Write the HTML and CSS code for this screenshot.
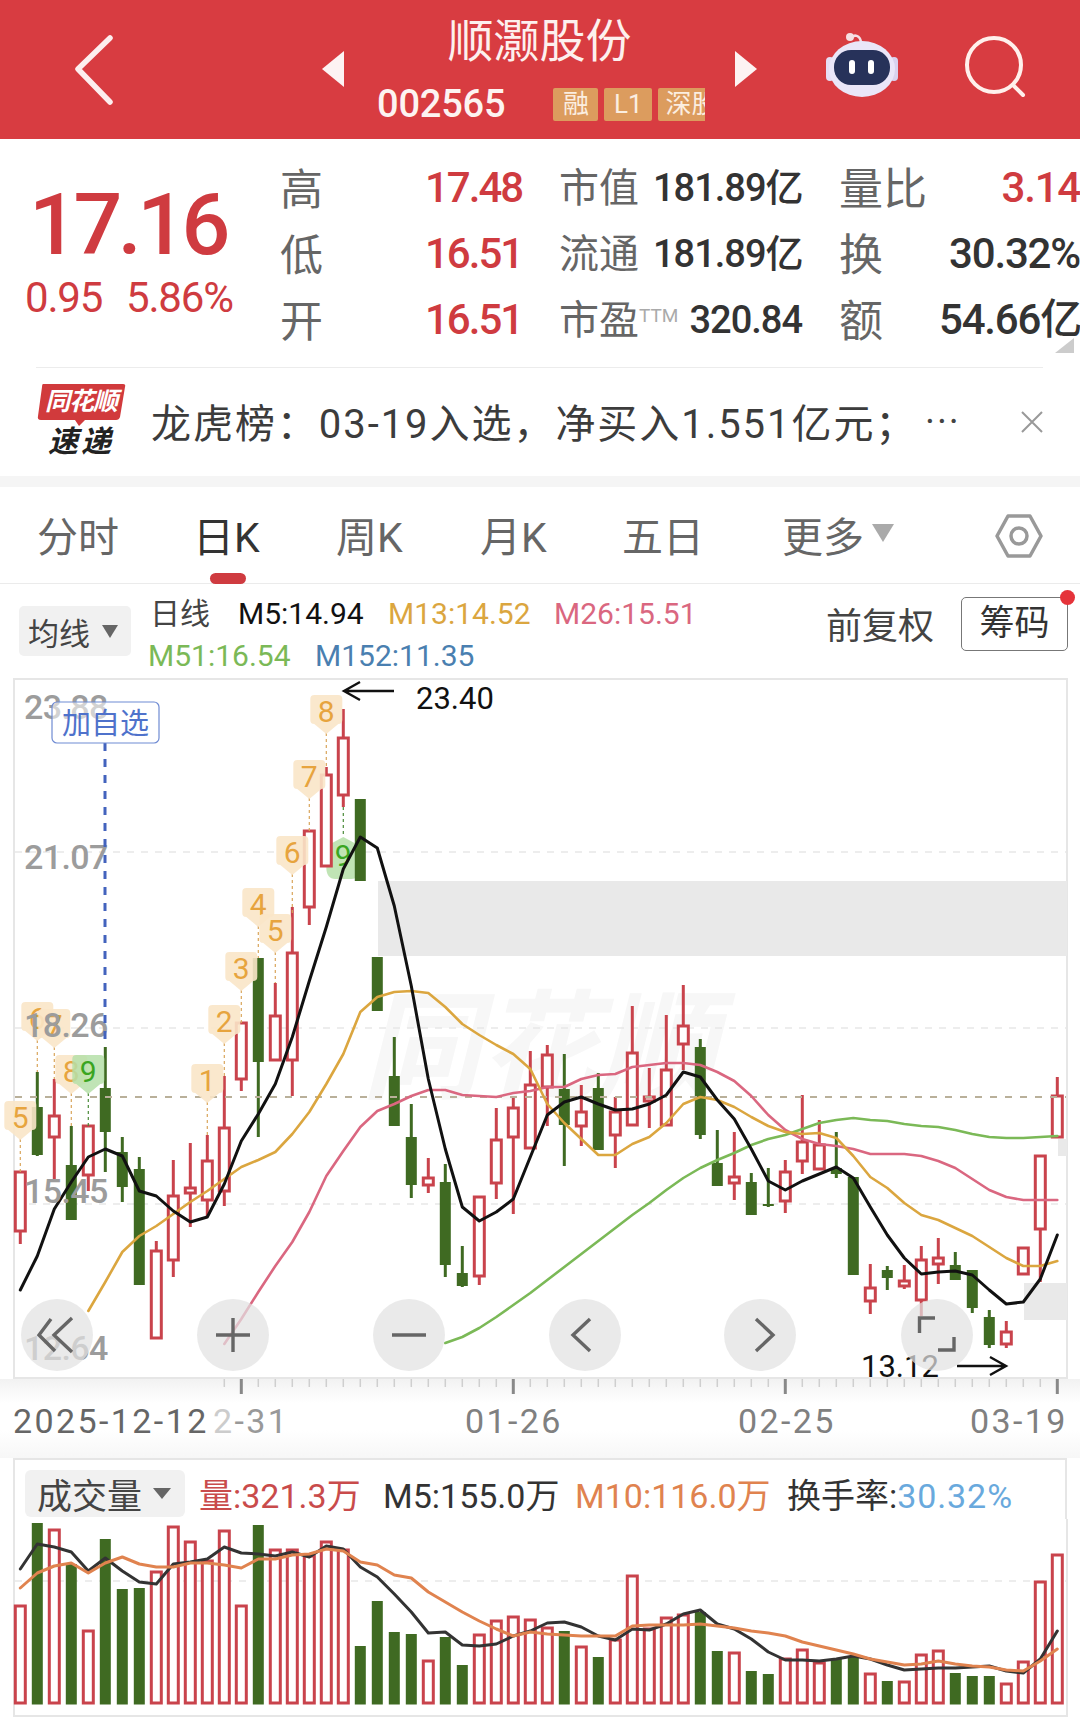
FILE: index.html
```html
<!DOCTYPE html>
<html lang="zh-CN">
<head>
    <meta charset="UTF-8">
    <meta name="viewport" content="width=device-width, initial-scale=1.0">
    <title>顺灏股份 002565</title>
    <link rel="stylesheet" href="styles.css">
</head>
<body>
    <header class="topbar">
        <div class="back">
            <svg width="40" height="70" viewBox="0 0 40 70"><path d="M36 3 L4 34 L36 67" class="back-line"/></svg>
        </div>
        <div class="tri tri-left"></div>
        <div class="stock">
            <div class="stock-name">顺灏股份</div>
            <div class="stock-meta">
                <span class="stock-code">002565</span>
                <div class="tags">
                    <span class="tag tag-rong">融</span>
                    <span class="tag tag-l1">L1</span>
                    <span class="tag tag-shen">深股</span>
                </div>
            </div>
        </div>
        <div class="tri tri-right"></div>
        <svg class="robot" width="76" height="68" viewBox="0 0 76 68">
            <path d="M27 7 C30 3 36 4 37 11" fill="none" stroke="#f4dfe6" stroke-width="2.5"/>
            <circle cx="26" cy="6" r="4" fill="#f6dfe2"/>
            <rect x="2" y="26" width="8" height="24" rx="4" fill="#e6def4"/>
            <rect x="66" y="26" width="8" height="24" rx="4" fill="#d9d2ee"/>
            <ellipse cx="38" cy="38" rx="33" ry="28" fill="#eae6f8"/>
            <rect x="10" y="19" width="56" height="35" rx="17" fill="#27325a"/>
            <rect x="25" y="29" width="6" height="14" rx="3" fill="#fff"/>
            <rect x="44" y="29" width="6" height="14" rx="3" fill="#fff"/>
        </svg>
        <svg class="search" width="68" height="68" viewBox="0 0 68 68">
            <circle cx="30" cy="30" r="27" class="search-line"/>
            <path d="M49 50 L59 60" class="search-line"/>
        </svg>
    </header>

    <section class="quote">
        <div class="price-box">
            <div class="price">17.16</div>
            <div class="change"><span>0.95</span><span>5.86%</span></div>
        </div>
        <div class="stats">
            <span class="lbl">高</span><span class="up">17.48</span>
            <span class="lbl2">市值</span><span class="val">181.89亿</span>
            <span class="lbl3">量比</span><span class="val3 up">3.14</span>

            <span class="lbl">低</span><span class="up">16.51</span>
            <span class="lbl2">流通</span><span class="val">181.89亿</span>
            <span class="lbl3">换</span><span class="val3">30.32%</span>

            <span class="lbl">开</span><span class="up">16.51</span>
            <span class="lbl2 pe">市盈<sup class="ttm">TTM</sup></span><span class="val pe-val">320.84</span>
            <span class="lbl3">额</span><span class="val3">54.66亿</span>
        </div>
        <div class="corner"></div>
    </section>

    <section class="news">
        <svg class="news-logo" width="90" height="76" viewBox="0 0 90 76">
            <path d="M6 2 H86 Q89 2 88 5 L83 35 Q82 38 79 38 H48 L42 44 L38 38 H4 Q0 38 1 34 L5 5 Q5 2 6 2 Z" fill="#d13a3c"/>
            <text x="44" y="28" class="logo-top">同花顺</text>
            <text x="44" y="70" class="logo-bottom">速递</text>
        </svg>
        <div class="news-text">龙虎榜：03-19入选，净买入1.551亿元；</div>
        <div class="news-more">···</div>
        <svg class="news-close" width="24" height="24" viewBox="0 0 24 24"><path d="M2 2 L22 22 M22 2 L2 22" stroke="#999" stroke-width="2" fill="none"/></svg>
    </section>

    <nav class="tabs">
        <span class="tab tab-a">分时</span>
        <span class="tab tab-b on">日K</span>
        <span class="tab tab-c">周K</span>
        <span class="tab tab-d">月K</span>
        <span class="tab tab-e">五日</span>
        <span class="tab tab-f">更多</span>
        <span class="more-arrow"></span>
        <svg class="gear" width="50" height="46" viewBox="0 0 50 46">
            <path d="M14 3 H36 L47 23 L36 43 H14 L3 23 Z" fill="none" stroke="#999" stroke-width="3.5" stroke-linejoin="round"/>
            <circle cx="25" cy="23" r="8" fill="none" stroke="#999" stroke-width="3.5"/>
        </svg>
    </nav>

    <section class="legend">
        <div class="ma-select"><span>均线</span><i class="caret"></i></div>
        <div class="ma-values">
            <div class="ma-row">
                <span class="ma-name">日线</span>
                <span class="m5">M5:14.94</span>
                <span class="m13">M13:14.52</span>
                <span class="m26">M26:15.51</span>
            </div>
            <div class="ma-row">
                <span class="m51">M51:16.54</span>
                <span class="m152">M152:11.35</span>
            </div>
        </div>
        <span class="adjust">前复权</span>
        <div class="chip">筹码<i class="chip-dot"></i></div>
    </section>

    <svg id="kline" class="kline" width="1080" height="780" viewBox="0 679 1080 780"></svg>

    <section class="vol-head">
        <div class="vol-select"><span>成交量</span><i class="caret"></i></div>
        <span class="vol-now">量:321.3万</span>
        <span class="vol-m5">M5:155.0万</span>
        <span class="vol-m10">M10:116.0万</span>
        <span class="vol-rate">换手率:<b>30.32%</b></span>
    </section>

    <svg id="volume" class="volume" width="1080" height="200" viewBox="0 1520 1080 200"></svg>

    <script src="chart.js"></script>
</body>
</html>
```

FILE: styles.css
```css
* {
    box-sizing: border-box;
}
html, body {
    margin: 0;
    padding: 0;
}
body {
    width: 1080px;
    height: 1720px;
    overflow: hidden;
    background: #fff;
    font-family: Roboto, "Noto Sans CJK SC", sans-serif;
    color: #333;
}

/* top bar */
.topbar {
    height: 139px;
    background: #d83c41;
    display: flex;
    align-items: center;
    color: #fff;
}
.back {
    width: 322px;
    padding-left: 74px;
    display: flex;
}
.back-line {
    fill: none;
    stroke: #fdeeee;
    stroke-width: 5.5;
    stroke-linecap: round;
    stroke-linejoin: round;
}
.tri {
    width: 0;
    height: 0;
    border-top: 18px solid transparent;
    border-bottom: 18px solid transparent;
    margin-bottom: 2px;
}
.tri-left {
    border-right: 22px solid #fdf3f3;
}
.tri-right {
    border-left: 22px solid #fdf3f3;
}
.stock {
    width: 391px;
    height: 139px;
    padding-top: 10px;
    display: flex;
    flex-direction: column;
}
.stock-name {
    font-size: 46px;
    line-height: 62px;
    text-align: center;
    font-weight: 400;
    color: #fdf0ee;
}
.stock-meta {
    display: flex;
    align-items: center;
    margin-top: 14px;
}
.stock-code {
    font-size: 38px;
    line-height: 36px;
    font-weight: 500;
    margin-left: 33px;
    letter-spacing: -0.2px;
    color: #fdf3f1;
}
.tags {
    display: flex;
    gap: 6px;
    margin-left: 48px;
    width: 152px;
    overflow: hidden;
}
.tag {
    height: 33px;
    line-height: 33px;
    background: #dc9c5e;
    color: #fbeee0;
    font-size: 26px;
    text-align: center;
    border-radius: 2px;
    overflow: hidden;
    flex: none;
}
.tag-rong {
    width: 45px;
}
.tag-l1 {
    width: 48px;
}
.tag-shen {
    width: 58px;
    text-align: left;
    padding-left: 7px;
    white-space: nowrap;
}
.robot {
    margin-left: 67px;
    margin-top: -10px;
}
.search {
    margin-left: 64px;
    margin-top: -2px;
}
.search-line {
    fill: none;
    stroke: #fff0ec;
    stroke-width: 4;
    stroke-linecap: round;
}

/* quote */
.quote {
    height: 229px;
    margin: 0;
    padding-top: 16px;
    display: flex;
    position: relative;
}
.quote::after {
    content: "";
    position: absolute;
    left: 36px;
    right: 37px;
    bottom: 0;
    height: 1px;
    background: #ececec;
}
.price-box {
    width: 280px;
    padding-left: 26px;
    color: #cf3b40;
}
.price {
    font-size: 86px;
    line-height: 76px;
    font-weight: 500;
    margin-top: 32px;
    padding-left: 3px;
    letter-spacing: -4.5px;
}
.change {
    display: flex;
    gap: 24px;
    font-size: 42px;
    line-height: 40px;
    margin-top: 15px;
    letter-spacing: -1.2px;
    margin-left: -1px;
}
.stats {
    display: grid;
    grid-template-columns: 145px 95px 39px 94px 149px 37px 100px 141px;
    grid-template-rows: 66px 66px 66px;
    align-items: center;
}
.stats > span {
    line-height: 50px;
}
.lbl, .lbl3 {
    font-size: 43px;
    color: #666;
    margin-top: 3px;
}
.lbl {
    grid-column: 1;
}
.lbl2 {
    grid-column: 4;
    font-size: 40px;
    color: #666;
    white-space: nowrap;
    margin-top: 1px;
}
.lbl3 {
    grid-column: 7;
    font-size: 44px;
    white-space: nowrap;
}
.up {
    color: #cf3b40;
    font-size: 42px;
    font-weight: 500;
    text-align: right;
    letter-spacing: -2px;
}
.val, .val3 {
    font-size: 38px;
    font-weight: 500;
    text-align: right;
    color: #333;
    white-space: nowrap;
    letter-spacing: -1px;
}
.val3 {
    font-size: 42px;
    grid-column: 8;
    letter-spacing: -1.2px;
}
.val3.up {
    color: #cf3b40;
}
.ttm {
    font-size: 19px;
    color: #aaa;
    vertical-align: 12px;
    line-height: 0;
}
.corner {
    position: absolute;
    right: 6px;
    top: 199px;
    width: 0;
    height: 0;
    border-left: 19px solid transparent;
    border-bottom: 15px solid #ccc;
}

/* news strip */
.news {
    height: 119px;
    border-bottom: 11px solid #f5f5f5;
    display: flex;
    align-items: center;
    padding-left: 37px;
}
.news-logo {
    flex: none;
    margin-top: -5px;
}
.logo-top {
    font-size: 25px;
    font-weight: 700;
    font-style: italic;
    fill: #fff;
    text-anchor: middle;
    letter-spacing: -1px;
}
.logo-bottom {
    font-size: 30px;
    font-weight: 700;
    font-style: italic;
    fill: #222;
    text-anchor: middle;
    letter-spacing: 3px;
}
.news-text {
    font-size: 40px;
    line-height: 50px;
    margin-left: 24px;
    margin-top: 5px;
    width: 774px;
    white-space: nowrap;
    color: #3c3c3c;
    letter-spacing: 1.95px;
}
.news-more {
    font-size: 38px;
    width: 95px;
    color: #444;
    letter-spacing: 2px;
}
.news-close {
    flex: none;
}

/* tabs */
.tabs {
    height: 97px;
    border-bottom: 1px solid #ebebeb;
    display: flex;
    align-items: center;
    font-size: 41px;
    color: #666;
    position: relative;
    padding-bottom: 2px;
}
.tab {
    white-space: nowrap;
}
.tab-a {
    margin-left: 37px;
    width: 156px;
}
.tab-b {
    width: 143px;
}
.tab-c {
    width: 144px;
}
.tab-d {
    width: 142px;
}
.tab-e {
    width: 160px;
}
.tab-f {
    width: 90px;
}
.on {
    color: #333;
    position: relative;
}
.on::after {
    content: "";
    position: absolute;
    left: 17px;
    top: 69px;
    width: 36px;
    height: 11px;
    border-radius: 6px;
    background: #cf3b40;
}
.more-arrow {
    width: 0;
    height: 0;
    border-left: 11px solid transparent;
    border-right: 11px solid transparent;
    border-top: 18px solid #aaa;
    margin-top: -2px;
}
.gear {
    margin-left: 100px;
    margin-top: 4px;
}

/* moving-average legend */
.legend {
    height: 94px;
    display: flex;
    align-items: flex-start;
    padding-left: 19px;
    position: relative;
}
.ma-select {
    width: 112px;
    height: 50px;
    margin-top: 22px;
    background: #f1f1f1;
    border-radius: 5px;
    display: flex;
    align-items: center;
    padding-left: 9px;
    font-size: 31px;
    color: #444;
    gap: 12px;
}
.caret {
    width: 0;
    height: 0;
    border-left: 8px solid transparent;
    border-right: 8px solid transparent;
    border-top: 13px solid #666;
}
.ma-values {
    margin-left: 17px;
    margin-top: 9px;
    width: 678px;
    font-size: 30px;
}
.ma-row {
    height: 42px;
    line-height: 42px;
    display: flex;
    white-space: nowrap;
}
.ma-name {
    width: 90px;
    color: #444;
    padding-left: 2px;
}
.m5 {
    width: 150px;
    color: #111;
}
.m13 {
    width: 166px;
    color: #dba63f;
}
.m26 {
    color: #da6780;
}
.m51 {
    width: 167px;
    color: #7bb957;
}
.m152 {
    color: #4a7fb0;
}
.adjust {
    font-size: 36px;
    line-height: 50px;
    margin-top: 18px;
    color: #444;
    width: 135px;
    white-space: nowrap;
}
.chip {
    width: 107px;
    height: 54px;
    margin-top: 13px;
    border: 1px solid #777;
    border-radius: 5px;
    font-size: 35px;
    line-height: 52px;
    text-align: center;
    color: #333;
    position: relative;
}
.chip-dot {
    position: absolute;
    right: -8px;
    top: -8px;
    width: 15px;
    height: 15px;
    border-radius: 50%;
    background: #e5333a;
}

/* charts */
.kline, .volume {
    display: block;
}
.frame {
    fill: #fff;
    stroke: #e6e6e6;
    stroke-width: 2;
}
.grid-line {
    stroke: #e8e8e8;
    stroke-width: 1.5;
    stroke-dasharray: 7 7;
}
.now-line {
    stroke: #b9b09a;
    stroke-width: 2;
    stroke-dasharray: 7 8;
}
.band {
    fill: #e9e9e9;
}
.watermark {
    font-size: 118px;
    font-weight: 700;
    font-style: italic;
    fill: #f7f7f7;
}
.bar-up {
    fill: #fff;
    stroke: #c9434c;
    stroke-width: 3;
}
.bar-down {
    fill: #3f6a22;
}
.wick-up {
    stroke: #c9434c;
    stroke-width: 3;
}
.wick-down {
    stroke: #3f6a22;
    stroke-width: 3;
}
.ma {
    fill: none;
    stroke-width: 2.6;
    stroke-linejoin: round;
    stroke-linecap: round;
}
.ma-black {
    stroke: #111;
    stroke-width: 3;
}
.ma-orange {
    stroke: #dba63f;
}
.ma-pink {
    stroke: #da6780;
}
.ma-green {
    stroke: #7bb957;
}
.vol-black {
    stroke: #333;
    stroke-width: 3;
}
.vol-orange {
    stroke: #e0834f;
    stroke-width: 3;
}
.badge-o {
    fill: #f9e5c8;
    opacity: 0.9;
}
.badge-g {
    fill: #b5dfa8;
    opacity: 0.85;
}
.badge-text {
    font-size: 30px;
    text-anchor: middle;
}
.badge-text-o {
    fill: #e7a43e;
}
.badge-text-g {
    fill: #3aa521;
}
.badge-dash-o {
    stroke: #d9a55a;
    stroke-width: 1.2;
    stroke-dasharray: 3 3;
}
.badge-dash-g {
    stroke: #4a8a38;
    stroke-width: 1.2;
    stroke-dasharray: 3 3;
}
.axis-price {
    font-size: 34px;
    font-weight: 500;
    fill: #9c9c9c;
    letter-spacing: -0.6px;
}
.pick-line {
    stroke: #4363bd;
    stroke-width: 3;
    stroke-dasharray: 8 8;
}
.pick-box {
    fill: rgba(255, 255, 255, 0.55);
    stroke: #6f8bd3;
    stroke-width: 1.2;
}
.pick-text {
    font-size: 29px;
    fill: #4f72cb;
    text-anchor: middle;
}
.peak-text {
    font-size: 31px;
    fill: #111;
}
.peak-arrow {
    fill: none;
    stroke: #111;
    stroke-width: 2.4;
}
.ctl {
    fill: rgba(226, 226, 226, 0.72);
}
.ctl-icon {
    fill: none;
    stroke: #666;
    stroke-width: 3.4;
}
.tick {
    stroke: #cfcfcf;
    stroke-width: 1.5;
}
.tick-major {
    stroke: #888;
    stroke-width: 3;
}
.date {
    font-size: 34px;
    fill: #808080;
    letter-spacing: 2.4px;
}
.date-first {
    fill: #666;
}
.date-fade {
    fill: #ccc;
}
.date-soft {
    fill: #999;
}

/* volume legend */
.vol-head {
    height: 61px;
    margin: 0 13px;
    border: 2px solid #e6e6e6;
    border-width: 2px 2px 0;
    display: flex;
    align-items: center;
    padding-left: 10px;
    font-size: 34px;
    white-space: nowrap;
}
.vol-select {
    width: 160px;
    height: 47px;
    margin-top: 8px;
    background: #f1f1f1;
    border-radius: 6px;
    display: flex;
    align-items: center;
    padding-left: 12px;
    gap: 11px;
    font-size: 35px;
    color: #444;
}
.vol-select .caret {
    border-left-width: 9px;
    border-right-width: 9px;
    border-top-width: 11px;
}
.vol-now, .vol-m5, .vol-m10, .vol-rate {
    margin-top: 8px;
}
.vol-now {
    width: 184px;
    margin-left: 14px;
    color: #c94b4b;
}
.vol-m5 {
    width: 192px;
    color: #333;
}
.vol-m10 {
    width: 212px;
    color: #e0834f;
}
.vol-rate {
    color: #333;
}
.vol-rate b {
    font-weight: 400;
    color: #69a9dd;
    letter-spacing: 0.9px;
}
```

FILE: chart.js
```js
// x position of candle i
function cx(i) {
    return 20.3 + 17 * i;
}

// [type, wick top, body top, body bottom, wick bottom], 0 = no wick
var candles = [
    ['u', 0, 1173, 1232, 1245], ['d', 1073, 1108, 1156, 1157], ['u', 1080, 1117, 1138, 1182], ['d', 1127, 1166, 1221, 0],
    ['u', 0, 1127, 1176, 1192], ['d', 1048, 1089, 1133, 1173], ['d', 1138, 1153, 1188, 1203], ['d', 1158, 1170, 1286, 0],
    ['u', 1242, 1252, 1339, 0], ['u', 1161, 1197, 1261, 1278], ['u', 1144, 1189, 1194, 1228], ['u', 1136, 1162, 1201, 1217],
    ['u', 1077, 1129, 1192, 1207], ['u', 0, 1024, 1080, 1092], ['d', 0, 959, 1063, 1138], ['u', 984, 1017, 1061, 0],
    ['u', 908, 954, 1061, 1097], ['u', 0, 832, 908, 926], ['u', 768, 776, 867, 0], ['u', 710, 739, 796, 808],
    ['d', 0, 800, 882, 0], ['d', 0, 958, 1012, 0], ['d', 1038, 1077, 1127, 0], ['d', 1105, 1138, 1186, 1199],
    ['u', 1159, 1179, 1186, 1194], ['d', 1165, 1183, 1266, 1278], ['d', 1247, 1274, 1287, 1288], ['u', 0, 1198, 1277, 1286],
    ['u', 1109, 1141, 1184, 1200], ['u', 1097, 1109, 1138, 1215], ['u', 1052, 1086, 1149, 0], ['u', 1046, 1056, 1088, 1127],
    ['d', 1055, 1090, 1126, 1167], ['u', 1086, 1113, 1127, 1147], ['d', 1074, 1089, 1151, 0], ['u', 1098, 1113, 1136, 1169],
    ['u', 1007, 1054, 1126, 0], ['u', 1069, 1098, 1102, 1129], ['u', 1016, 1071, 1126, 0], ['u', 986, 1027, 1045, 1071],
    ['d', 1040, 1048, 1136, 1140], ['d', 1131, 1164, 1187, 0], ['u', 1133, 1178, 1184, 1201], ['d', 1174, 1183, 1216, 0],
    ['d', 1169, 1205, 1207, 1208], ['u', 1161, 1173, 1202, 1214], ['u', 1096, 1143, 1162, 1175], ['u', 1121, 1146, 1170, 0],
    ['d', 1133, 1169, 1175, 1179], ['d', 0, 1178, 1276, 0], ['u', 1265, 1289, 1302, 1315], ['d', 1267, 1271, 1279, 1291],
    ['u', 1266, 1282, 1287, 1290], ['u', 1247, 1261, 1301, 1317], ['u', 1239, 1259, 1265, 1285], ['d', 1253, 1266, 1281, 0],
    ['d', 0, 1271, 1309, 1314], ['d', 1311, 1318, 1346, 1349], ['u', 1322, 1333, 1345, 1349], ['u', 0, 1249, 1275, 0],
    ['u', 0, 1157, 1230, 1283], ['u', 1078, 1097, 1138, 0]
];

var m5 = [1291, 1257, 1210, 1183, 1158, 1150, 1157, 1192, 1197, 1212, 1223, 1218, 1185, 1142, 1115, 1085, 1038, 982, 928, 870, 838, 849, 907, 987, 1080, 1150, 1208, 1222, 1213, 1200, 1158, 1116, 1103, 1098, 1105, 1111, 1110, 1105, 1096, 1073, 1078, 1101, 1120, 1150, 1182, 1191, 1182, 1175, 1168, 1179, 1208, 1236, 1259, 1275, 1273, 1272, 1276, 1291, 1305, 1303, 1280, 1236];
var m13 = [null, null, null, null, 1312, 1283, 1253, 1237, 1227, 1215, 1203, 1192, 1180, 1168, 1161, 1153, 1135, 1113, 1085, 1055, 1013, 998, 993, 992, 994, 1008, 1025, 1036, 1046, 1055, 1070, 1105, 1124, 1140, 1156, 1156, 1145, 1138, 1124, 1105, 1098, 1101, 1108, 1118, 1127, 1133, 1135, 1134, 1139, 1157, 1178, 1189, 1204, 1216, 1221, 1229, 1237, 1248, 1259, 1267, 1267, 1262];
var m26 = [null, null, null, null, null, null, null, null, null, null, null, null, 1345, 1320, 1293, 1267, 1243, 1213, 1177, 1152, 1128, 1112, 1105, 1097, 1091, 1091, 1096, 1097, 1098, 1094, 1092, 1088, 1088, 1080, 1076, 1075, 1068, 1066, 1064, 1064, 1066, 1073, 1082, 1097, 1116, 1131, 1140, 1145, 1147, 1150, 1155, 1155, 1155, 1157, 1162, 1169, 1180, 1191, 1198, 1201, 1201, 1201];
var m51 = [null, null, null, null, null, null, null, null, null, null, null, null, null, null, null, null, null, null, null, null, null, null, null, null, null, 1344, 1338, 1329, 1318, 1306, 1294, 1281, 1268, 1255, 1242, 1229, 1216, 1204, 1191, 1179, 1169, 1161, 1154, 1146, 1140, 1136, 1130, 1124, 1121, 1119, 1121, 1122, 1125, 1127, 1128, 1131, 1135, 1138, 1139, 1139, 1138, 1137];

var volBars = [
    ['u', 1607], ['d', 1524], ['u', 1531], ['d', 1565], ['u', 1632], ['d', 1540], ['d', 1590], ['d', 1589],
    ['u', 1573], ['u', 1528], ['u', 1543], ['u', 1562], ['u', 1532], ['u', 1607], ['d', 1526], ['u', 1551],
    ['u', 1551], ['u', 1557], ['u', 1543], ['u', 1551], ['d', 1647], ['d', 1602], ['d', 1633], ['d', 1635],
    ['u', 1662], ['d', 1638], ['d', 1666], ['u', 1636], ['u', 1622], ['u', 1618], ['u', 1621], ['u', 1629],
    ['d', 1632], ['u', 1648], ['d', 1658], ['u', 1641], ['u', 1577], ['u', 1630], ['u', 1619], ['u', 1616],
    ['d', 1613], ['d', 1652], ['u', 1654], ['d', 1672], ['d', 1675], ['u', 1660], ['u', 1651], ['u', 1664],
    ['d', 1660], ['d', 1657], ['u', 1675], ['d', 1682], ['u', 1683], ['u', 1656], ['u', 1652], ['d', 1674],
    ['d', 1677], ['d', 1677], ['u', 1685], ['u', 1663], ['u', 1583], ['u', 1556]
];
var volM5 = [1570, 1545, 1548, 1553, 1572, 1559, 1572, 1583, 1585, 1565, 1563, 1560, 1548, 1554, 1555, 1557, 1553, 1558, 1547, 1550, 1568, 1578, 1595, 1613, 1634, 1633, 1646, 1647, 1645, 1637, 1632, 1624, 1623, 1628, 1637, 1641, 1630, 1631, 1625, 1615, 1611, 1625, 1630, 1640, 1653, 1661, 1661, 1662, 1660, 1657, 1660, 1666, 1671, 1670, 1669, 1669, 1668, 1667, 1672, 1674, 1660, 1632];
var volM10 = [1589, 1574, 1567, 1564, 1574, 1564, 1558, 1565, 1568, 1568, 1564, 1564, 1566, 1569, 1560, 1560, 1556, 1555, 1550, 1552, 1563, 1566, 1576, 1579, 1593, 1603, 1613, 1622, 1630, 1637, 1633, 1635, 1636, 1637, 1637, 1637, 1627, 1626, 1626, 1626, 1625, 1627, 1629, 1632, 1634, 1637, 1643, 1647, 1651, 1655, 1660, 1663, 1666, 1665, 1662, 1665, 1667, 1668, 1671, 1672, 1662, 1650];

// [candle, label, badge centre y, green, dash end y]
var badges = [
    [18, '8', 713, false, 768], [17, '7', 778, false, 832], [16, '6', 854, false, 915],
    [14, '4', 906, false, 959], [15, '5', 932, false, 984], [13, '3', 970, false, 1024],
    [12, '2', 1023, false, 1077], [11, '1', 1082, false, 1136], [1, '6', 1020, false, 1073],
    [2, '7', 1027, false, 1080], [3, '8', 1073, false, 1127], [4, '9', 1073, true, 1127],
    [0, '5', 1119, false, 1173]
];

function line(x1, y1, x2, y2, cls) {
    return '<line x1="' + x1 + '" y1="' + y1 + '" x2="' + x2 + '" y2="' + y2 + '" class="' + cls + '"/>';
}

function rect(x, y, w, h, cls) {
    return '<rect x="' + x + '" y="' + y + '" width="' + w + '" height="' + h + '" class="' + cls + '"/>';
}

function text(x, y, str, cls) {
    return '<text x="' + x + '" y="' + y + '" class="' + cls + '">' + str + '</text>';
}

function maLine(values, cls) {
    var pts = [];
    values.forEach(function (v, i) {
        if (v !== null) pts.push(cx(i) + ',' + v);
    });
    return '<polyline points="' + pts.join(' ') + '" class="ma ' + cls + '"/>';
}

function candle(c, i) {
    var x = cx(i), out = '';
    var wick = c[0] === 'u' ? 'wick-up' : 'wick-down';
    if (c[1]) out += line(x, c[1], x, c[2], wick);
    if (c[4]) out += line(x, c[3], x, c[4], wick);
    if (c[0] === 'u') {
        out += rect(x - 5, c[2], 10, c[3] - c[2], 'bar-up');
    } else {
        out += rect(x - 5.5, c[2], 11, c[3] - c[2], 'bar-down');
    }
    return out;
}

function badge(b) {
    var x = cx(b[0]), y = b[2];
    var cls = b[3] ? 'badge-g' : 'badge-o';
    var tx = b[3] ? 'badge-text-g' : 'badge-text-o';
    var dash = b[3] ? 'badge-dash-g' : 'badge-dash-o';
    var out = line(x, y + 21, x, b[4], dash);
    out += '<path d="M' + (x - 12) + ' ' + (y - 17) + ' H' + (x + 12) + ' Q' + (x + 16) + ' ' + (y - 17) + ' ' + (x + 16) + ' ' + (y - 13) +
        ' V' + (y + 8) + ' Q' + (x + 16) + ' ' + (y + 12) + ' ' + (x + 12) + ' ' + (y + 12) + ' L' + x + ' ' + (y + 22) + ' L' + (x - 12) + ' ' + (y + 12) +
        ' Q' + (x - 16) + ' ' + (y + 12) + ' ' + (x - 16) + ' ' + (y + 8) + ' V' + (y - 13) + ' Q' + (x - 16) + ' ' + (y - 17) + ' ' + (x - 12) + ' ' + (y - 17) + ' Z" class="' + cls + '"/>';
    return out + text(x, y + 10, b[1], 'badge-text ' + tx);
}

// the last green 9 sits under the candle it belongs to, pointing up
function lowBadge() {
    var x = cx(19), y = 857;
    var out = line(x, 808, x, 838, 'badge-dash-g');
    out += '<path d="M' + x + ' 838 L' + (x + 13) + ' 845 L' + (x + 17) + ' 868 Q' + (x + 17) + ' 880 ' + (x + 8) + ' 880 H' + (x - 8) + ' Q' + (x - 17) + ' 880 ' + (x - 17) + ' 868 L' + (x - 13) + ' 845 Z" class="badge-g"/>';
    return out + text(x, y + 10, '9', 'badge-text badge-text-g');
}

function control(x, icon) {
    return '<circle cx="' + x + '" cy="1336" r="36" class="ctl"/><path d="' + icon + '" class="ctl-icon"/>';
}

function drawKline() {
    var h = '';
    h += '<defs><linearGradient id="axisBg" x1="0" y1="0" x2="0" y2="1">' +
        '<stop offset="0" stop-color="#f2f2f2"/><stop offset="0.3" stop-color="#fff"/>' +
        '<stop offset="0.65" stop-color="#fff"/><stop offset="1" stop-color="#f7f7f7"/></linearGradient></defs>';
    h += '<rect x="0" y="1380" width="1080" height="79" fill="url(#axisBg)"/>';
    h += rect(14, 680, 1053, 699, 'frame');

    // resistance bands and faint logo
    h += rect(378, 882, 689, 75, 'band');
    h += rect(1024, 1284, 43, 37, 'band');
    h += rect(1058, 1140, 9, 17, 'band');
    h += text(362, 1090, '同花顺', 'watermark');

    [853, 1029, 1205].forEach(function (y) {
        h += line(15, y, 1066, y, 'grid-line');
    });

    h += lowBadge();
    h += candles.map(candle).join('');
    h += line(15, 1098, 1066, 1098, 'now-line');
    h += badges.map(badge).join('');
    h += maLine(m26, 'ma-pink') + maLine(m51, 'ma-green') + maLine(m13, 'ma-orange') + maLine(m5, 'ma-black');

    // price axis
    h += text(24, 720, '23.88', 'axis-price');
    h += text(24, 870, '21.07', 'axis-price');
    h += text(24, 1038, '18.26', 'axis-price');
    h += text(24, 1204, '15.45', 'axis-price');
    h += text(24, 1361, '12.64', 'axis-price');

    // add-to-watchlist marker
    h += line(105, 744, 105, 1048, 'pick-line');
    h += '<rect x="52" y="703" width="107" height="41" rx="5" class="pick-box"/>';
    h += text(105.5, 735, '加自选', 'pick-text');

    // high / low notes
    h += '<path d="M394 692 H344 M360 683 L344 692 L360 701" class="peak-arrow"/>';
    h += text(416, 710, '23.40', 'peak-text');
    h += text(861, 1378, '13.12', 'peak-text');
    h += '<path d="M957 1367 H1006 M990 1358 L1006 1367 L990 1376" class="peak-arrow"/>';

    // zoom and pan buttons
    h += control(57, 'M51 1320 L39 1336 L55 1352 M72 1319 L54 1336 L72 1353');
    h += control(233, 'M216 1336 H250 M233 1319 V1353');
    h += control(409, 'M392 1336 H426');
    h += control(585, 'M590 1320 L573 1336 L590 1352');
    h += control(760, 'M756 1320 L773 1336 L756 1352');
    h += control(937, 'M919.5 1334 V1319 H935 M954 1338 V1351 H938');

    // time axis
    candles.forEach(function (c, i) {
        if (i < 12) return;
        var major = i === 13 || i === 29 || i === 45 || i === 61;
        h += line(cx(i), 1380, cx(i), major ? 1395 : 1388, major ? 'tick tick-major' : 'tick');
    });
    h += text(13, 1434, '2025-12-12', 'date date-first');
    h += '<text x="213" y="1434" class="date"><tspan class="date-fade">2</tspan><tspan class="date-soft">-31</tspan></text>';
    h += text(465, 1434, '01-26', 'date');
    h += text(738, 1434, '02-25', 'date');
    h += text(970, 1434, '03-19', 'date');

    document.getElementById('kline').innerHTML = h;
}

function drawVolume() {
    var h = '';
    h += rect(14, 1500, 1053, 217, 'frame');
    h += line(15, 1582, 1066, 1582, 'grid-line');
    volBars.forEach(function (b, i) {
        var x = cx(i);
        if (b[0] === 'u') {
            h += rect(x - 5, b[1], 10, 1704 - b[1], 'bar-up');
        } else {
            h += rect(x - 5.5, b[1], 11, 1705.5 - b[1], 'bar-down');
        }
    });
    h += maLine(volM5, 'vol-black') + maLine(volM10, 'vol-orange');
    document.getElementById('volume').innerHTML = h;
}

drawKline();
drawVolume();
```
